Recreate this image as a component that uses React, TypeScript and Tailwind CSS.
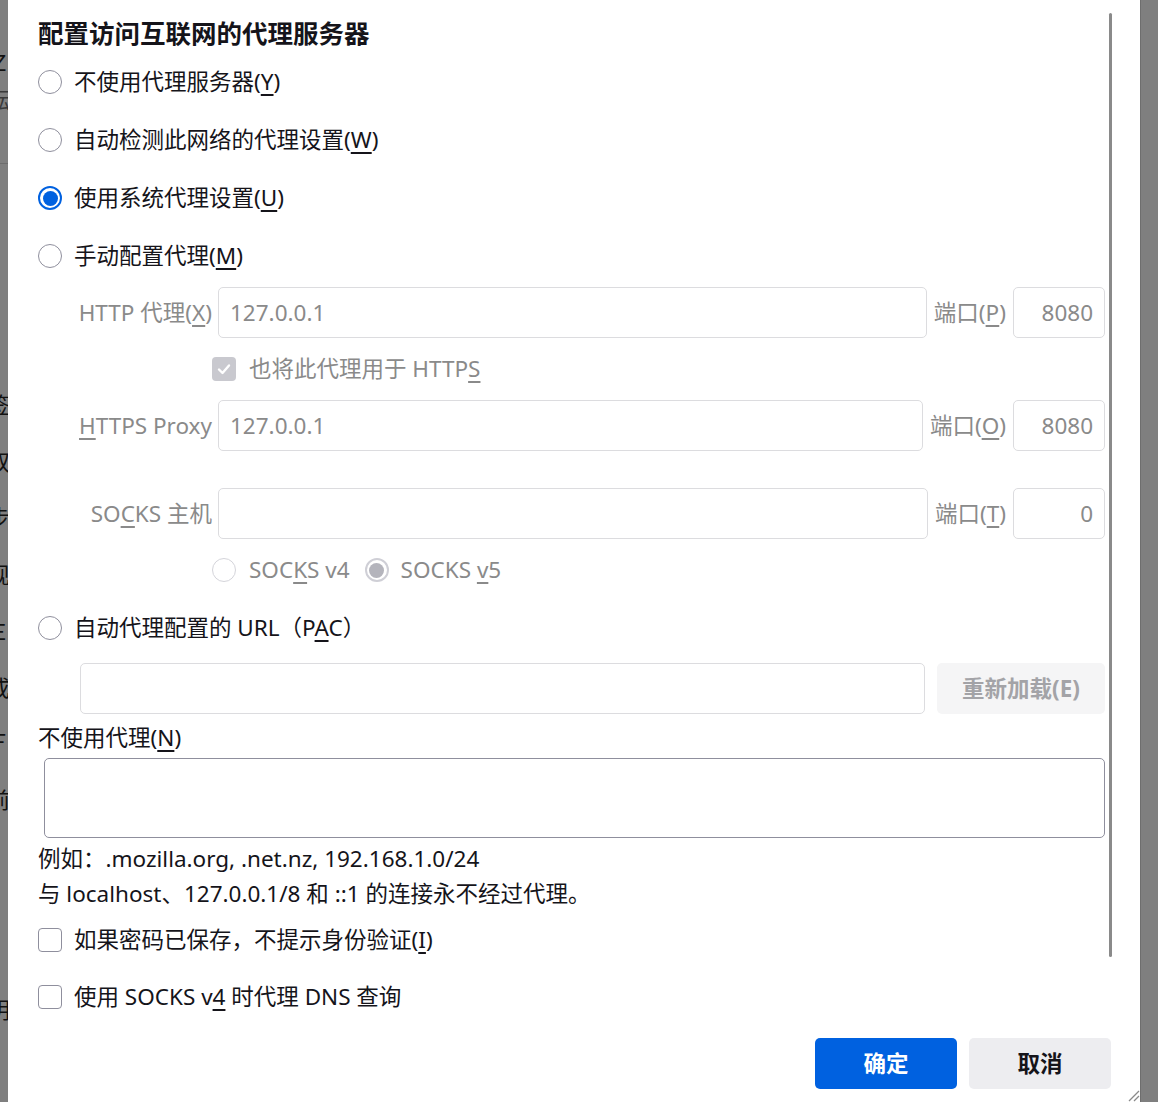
import React from "react";

const FONT = { fontFamily: '"Noto Sans", "Noto Sans CJK SC", sans-serif' };

function Radio({ checked = false, disabled = false }: { checked?: boolean; disabled?: boolean }) {
  if (checked && !disabled) {
    return (
      <span className="flex h-[24px] w-[24px] shrink-0 items-center justify-center rounded-full border-[2px] border-[#0061e0] bg-white">
        <span className="h-[15px] w-[15px] rounded-full bg-[#0061e0]" />
      </span>
    );
  }
  if (checked && disabled) {
    return (
      <span className="flex h-[24px] w-[24px] shrink-0 items-center justify-center rounded-full border-[2px] border-[#cfcfd6] bg-white">
        <span className="h-[15px] w-[15px] rounded-full bg-[#b4b4bc]" />
      </span>
    );
  }
  return (
    <span
      className={
        "block h-[24px] w-[24px] shrink-0 rounded-full border-[1.5px] bg-white " +
        (disabled ? "border-[#d4d4da]" : "border-[#8f8f9d]")
      }
    />
  );
}

function Checkbox({ checked = false, disabled = false }: { checked?: boolean; disabled?: boolean }) {
  if (checked) {
    return (
      <span className="flex h-[24px] w-[24px] shrink-0 items-center justify-center rounded-[4px] bg-[#c9c9cf]">
        <svg width="16" height="16" viewBox="0 0 16 16">
          <path d="M3 8.5 L6.5 12 L13 4.5" fill="none" stroke="white" strokeWidth="2.4" strokeLinecap="round" strokeLinejoin="round" />
        </svg>
      </span>
    );
  }
  return (
    <span
      className={
        "block h-[24px] w-[24px] shrink-0 rounded-[4px] border-[1.5px] bg-white " +
        (disabled ? "border-[#d4d4da]" : "border-[#8f8f9d]")
      }
    />
  );
}

function U({ children }: { children: React.ReactNode }) {
  return <span className="underline decoration-[1.5px] underline-offset-[4px]">{children}</span>;
}

function TextInput({ value = "", right = false, className = "" }: { value?: string; right?: boolean; className?: string }) {
  return (
    <div
      className={
        "flex h-[51px] items-center rounded-[5px] border border-[#dcdcdf] bg-white px-[11px] text-[#8a8a8a] " +
        (right ? "justify-end " : "") +
        className
      }
    >
      {value}
    </div>
  );
}

function ProxyRow({
  label,
  value,
  portLabel,
  port,
}: {
  label: React.ReactNode;
  value: string;
  portLabel: React.ReactNode;
  port: string;
}) {
  return (
    <div className="flex h-[51px] items-center pl-[36px] text-[#8a8a8a]">
      <div className="flex w-[138px] shrink-0 justify-end whitespace-nowrap">{label}</div>
      <TextInput value={value} className="ml-[6px] min-w-0 flex-1" />
      <div className="mx-[7px] whitespace-nowrap">{portLabel}</div>
      <TextInput value={port} right className="w-[92px] shrink-0" />
    </div>
  );
}

const leftFrags: { y: number; t: React.ReactNode; c?: string }[] = [
  { y: 48, t: <span>Ｚ<span className="underline">U</span></span> },
  { y: 85, t: "酝", c: "text-[#3a3a3a]" },
  { y: 390, t: "签" },
  { y: 447, t: "双" },
  { y: 503, t: "步" },
  { y: 560, t: "现" },
  { y: 617, t: <span>Ｅ<span className="underline">E</span></span> },
  { y: 673, t: "或" },
  { y: 727, t: <span>Ｆ<span className="underline">F</span></span> },
  { y: 785, t: "前" },
  { y: 995, t: "明" },
];

export default function App() {
  return (
    <div className="flex h-[1102px] w-[1158px] overflow-hidden bg-[#7f7f7f] text-[22.5px] leading-[1.3] text-[#15141a]" style={FONT}>
      {/* dimmed page behind the dialog */}
      <div className="relative h-full w-[8px] shrink-0 overflow-hidden bg-[#7f7f7f] text-[#111111]">
        {leftFrags.map((f, i) => (
          <span key={i} className={"absolute left-[-12px] whitespace-nowrap text-[22px] " + (f.c || "")} style={{ top: f.y }}>
            {f.t}
          </span>
        ))}
        <div className="absolute left-0 top-[163px] h-px w-full bg-[#6d6d6d]" />
      </div>

      {/* dialog */}
      <div className="relative flex h-full w-[1132px] shrink-0 flex-col bg-white">
        <div className="flex flex-col pl-[30px] pr-[35px]">
          <div className="pt-[14px]">
            <h1 className="text-[25.5px] font-bold leading-[39px]">配置访问互联网的代理服务器</h1>
          </div>

          <label className="flex h-[58px] items-center gap-[12px]">
            <Radio />
            <span>不使用代理服务器(<U>Y</U>)</span>
          </label>
          <label className="flex h-[58px] items-center gap-[12px]">
            <Radio />
            <span>自动检测此网络的代理设置(<U>W</U>)</span>
          </label>
          <label className="flex h-[58px] items-center gap-[12px]">
            <Radio checked />
            <span>使用系统代理设置(<U>U</U>)</span>
          </label>
          <label className="flex h-[58px] items-center gap-[12px]">
            <Radio />
            <span>手动配置代理(<U>M</U>)</span>
          </label>

          <div className="mt-[2px]">
            <ProxyRow
              label={<span>HTTP 代理(<U>X</U>)</span>}
              value="127.0.0.1"
              portLabel={<span>端口(<U>P</U>)</span>}
              port="8080"
            />
          </div>

          <div className="flex h-[62px] items-center gap-[13px] pl-[174px] text-[#8a8a8a]">
            <Checkbox checked disabled />
            <span>也将此代理用于 HTTP<U>S</U></span>
          </div>

          <ProxyRow
            label={<span><U>H</U>TTPS Proxy</span>}
            value="127.0.0.1"
            portLabel={<span>端口(<U>O</U>)</span>}
            port="8080"
          />

          <div className="mt-[37px]">
            <ProxyRow
              label={<span>SO<U>C</U>KS 主机</span>}
              value=""
              portLabel={<span>端口(<U>T</U>)</span>}
              port="0"
            />
          </div>

          <div className="flex h-[62px] items-center pl-[174px] text-[#8a8a8a]">
            <Radio disabled />
            <span className="ml-[13px]">SOC<U>K</U>S v4</span>
            <span className="ml-[15px]">
              <Radio checked disabled />
            </span>
            <span className="ml-[12px]">SOCKS <U>v</U>5</span>
          </div>

          <label className="flex h-[54px] items-center gap-[12px]">
            <Radio />
            <span>自动代理配置的 URL（P<U>A</U>C）</span>
          </label>

          <div className="mt-[8px] flex h-[51px] items-center pl-[42px]">
            <TextInput className="min-w-0 flex-1" />
            <div className="ml-[12px] flex h-[51px] w-[168px] shrink-0 items-center justify-center rounded-[5px] bg-[#f5f5f6] font-bold text-[#a3a3a7]">
              重新加载(E)
            </div>
          </div>

          <div className="flex h-[44px] items-center pt-[4px]">
            <span>不使用代理(<U>N</U>)</span>
          </div>

          <div className="ml-[6px] h-[80px] rounded-[5px] border border-[#8f8f9d] bg-white" />

          <div className="pt-[3px] leading-[35px]">
            <div>例如：.mozilla.org, .net.nz, 192.168.1.0/24</div>
            <div>与 localhost、127.0.0.1/8 和 ::1 的连接永不经过代理。</div>
          </div>

          <label className="flex h-[58px] items-center gap-[12px]">
            <Checkbox />
            <span>如果密码已保存，不提示身份验证(<U>I</U>)</span>
          </label>
          <label className="flex h-[56px] items-center gap-[12px]">
            <Checkbox />
            <span>使用 SOCKS v<U>4</U> 时代理 DNS 查询</span>
          </label>
        </div>

        {/* footer */}
        <div className="mt-[13px] flex justify-end gap-[12px] pr-[29px]">
          <button className="flex h-[51px] w-[142px] items-center justify-center rounded-[5px] bg-[#0061e0] font-bold text-white">
            确定
          </button>
          <button className="flex h-[51px] w-[142px] items-center justify-center rounded-[5px] bg-[#ededf0] font-bold text-[#15141a]">
            取消
          </button>
        </div>

        {/* overlay scrollbar thumb */}
        <div className="absolute left-[1101px] top-[13px] h-[944px] w-[3px] rounded-full bg-[#8a8a8a]" />

        {/* resize grip */}
        <svg className="absolute bottom-0 right-0" width="14" height="14" viewBox="0 0 14 14">
          <path d="M13 3 L3 13 M13 8 L8 13" stroke="#8a8a8a" strokeWidth="1.3" />
        </svg>
      </div>

      <div className="h-full flex-1 border-l border-[#6e6e6e] bg-[#7f7f7f]" />
    </div>
  );
}
